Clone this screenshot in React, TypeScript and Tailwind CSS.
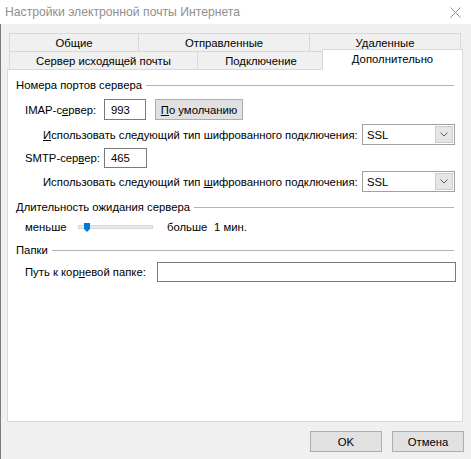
import React from "react";

const font = { fontFamily: '"Liberation Sans", Arial, sans-serif' };

function Tab({ w, label, last }: { w: string; label: string; last?: boolean }) {
  return (
    <div
      className={`${w} h-[18px] shrink-0 border-t border-l border-[#d9d9d9] ${last ? "border-r" : ""} flex items-center justify-center text-black whitespace-nowrap`}
    >
      {label}
    </div>
  );
}

function Legend({ children }: { children: React.ReactNode }) {
  return (
    <div className="flex items-center h-[16px] pl-[8px] pr-[8px]">
      <span className="whitespace-nowrap">{children}</span>
      <div className="flex-1 h-px bg-[#b4b4b4] ml-[4px]" />
    </div>
  );
}

function Select() {
  return (
    <div className="w-[93px] h-[21px] shrink-0 border border-[#a0a0a0] bg-white flex items-center pl-[4px] pr-[1px]">
      <span className="flex-1">SSL</span>
      <div className="w-[18px] h-[17px] bg-[#e5e5e5] border border-[#cccccc] flex items-center justify-center">
        <svg width="8" height="5" viewBox="0 0 8 5">
          <path d="M0.5 0.5L4 4L7.5 0.5" fill="none" stroke="#606060" strokeWidth="1" />
        </svg>
      </div>
    </div>
  );
}

export default function App() {
  return (
    <div className="w-[471px] h-[459px] bg-[#f0f0f0] text-[11.3px] text-black leading-[16px] overflow-hidden" style={font}>
      <div className="h-[24px] bg-white flex items-center justify-between pl-[5px] pr-[10px]">
        <span className="text-[12.2px] text-[#8f8f8f] whitespace-nowrap">Настройки электронной почты Интернета</span>
        <svg width="11" height="11" viewBox="0 0 11 11">
          <path d="M0.5 0.5L10.5 10.5M10.5 0.5L0.5 10.5" stroke="#8c8c8c" strokeWidth="1" />
        </svg>
      </div>

      <div className="border-l border-[#7b7b7b] h-[435px]">
        <div className="pt-[9px] pl-[8px]">
          <div className="flex">
            <Tab w="w-[129px]" label="Общие" />
            <Tab w="w-[171px]" label="Отправленные" />
            <Tab w="w-[152px]" label="Удаленные" last />
          </div>
          <div className="flex h-[18px] items-start">
            <Tab w="w-[188px]" label="Сервер исходящей почты" />
            <Tab w="w-[127px]" label="Подключение" />
            <div className="relative z-10 w-[141px] h-[21px] -mt-[2px] -ml-[2px] shrink-0 bg-white border-t border-l border-r border-[#d9d9d9] flex justify-center pt-[1px] whitespace-nowrap">
              Дополнительно
            </div>
          </div>
        </div>

        <div className="ml-[6px] w-[456px] h-[353px] bg-white border border-[#d9d9d9]">
          <div className="mt-[7px]">
            <Legend>Номера портов сервера</Legend>
          </div>

          <div className="mt-[6px] flex items-center pl-[17px]">
            <span className="w-[79px] whitespace-nowrap">
              IMAP-с<span className="underline">е</span>рвер:
            </span>
            <div className="w-[42px] h-[21px] border border-[#7a7a7a] flex items-center pl-[6px]">993</div>
            <button className="ml-[9px] w-[88px] h-[21px] bg-[#e1e1e1] border border-[#adadad] flex items-center justify-center whitespace-nowrap">
              <span>
                <span className="underline">П</span>о умолчанию
              </span>
            </button>
          </div>

          <div className="mt-[4px] flex items-center pl-[35px]">
            <span className="w-[319px] whitespace-nowrap">
              <span className="underline">И</span>спользовать следующий тип шифрованного подключения:
            </span>
            <Select />
          </div>

          <div className="mt-[3px] flex items-center pl-[17px]">
            <span className="w-[79px] whitespace-nowrap">
              SMTP-сер<span className="underline">в</span>ер:
            </span>
            <div className="w-[43px] h-[20px] border border-[#7a7a7a] flex items-center pl-[6px]">465</div>
          </div>

          <div className="mt-[3px] flex items-center pl-[35px]">
            <span className="w-[319px] whitespace-nowrap">
              Использовать следующий тип <span className="underline">ш</span>ифрованного подключения:
            </span>
            <Select />
          </div>

          <div className="mt-[7px]">
            <Legend>
              <span className="underline">Д</span>лительность ожидания сервера
            </Legend>
          </div>

          <div className="mt-[4px] h-[16px] flex items-center pl-[17px]">
            <span className="w-[53px]">меньше</span>
            <div className="relative w-[75px] h-[4px] bg-[#e7eaea] border border-[#d6d6d6]">
              <svg className="absolute left-[5px] -top-[3px]" width="6" height="9" viewBox="0 0 6 9">
                <path d="M0 0H6V6L3 9L0 6Z" fill="#0078d7" />
              </svg>
            </div>
            <span className="ml-[14px] w-[47px]">больше</span>
            <span>1 мин.</span>
          </div>

          <div className="mt-[7px]">
            <Legend>Папки</Legend>
          </div>

          <div className="mt-[4px] flex items-center pl-[17px]">
            <span className="w-[132px] whitespace-nowrap">
              Путь к кор<span className="underline">н</span>евой папке:
            </span>
            <div className="w-[299px] h-[20px] border border-[#7a7a7a] bg-white" />
          </div>
        </div>

        <div className="mt-[9px] flex justify-end gap-[10px] pr-[7px]">
          <button className="w-[72px] h-[21px] bg-[#e1e1e1] border border-[#adadad] flex items-center justify-center">OK</button>
          <button className="w-[72px] h-[21px] bg-[#e1e1e1] border border-[#adadad] flex items-center justify-center">Отмена</button>
        </div>
      </div>
    </div>
  );
}
